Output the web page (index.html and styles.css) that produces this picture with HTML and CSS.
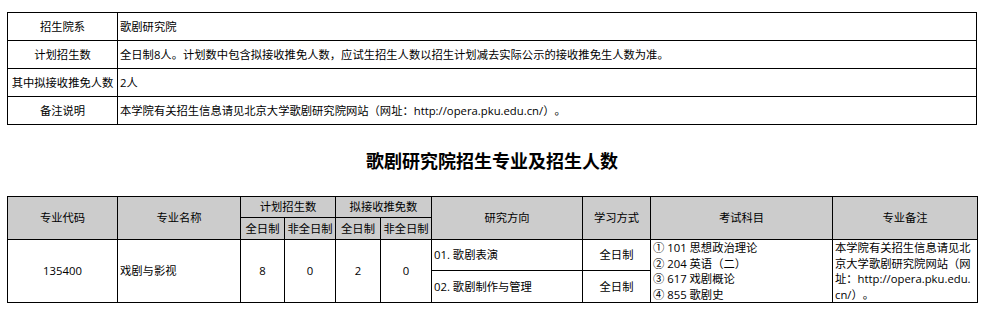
FILE: index.html
```html
<!DOCTYPE html>
<html lang="zh-CN">
<head>
<meta charset="utf-8">
<title>歌剧研究院招生专业及招生人数</title>
<link rel="stylesheet" href="styles.css">
</head>
<body>
<div class="page">
  <table class="info">
    <colgroup><col class="c-label"><col></colgroup>
    <tr><td class="label">招生院系</td><td>歌剧研究院</td></tr>
    <tr><td class="label">计划招生数</td><td>全日制8人。计划数中包含拟接收推免人数，应试生招生人数以招生计划减去实际公示的接收推免生人数为准。</td></tr>
    <tr><td class="label">其中拟接收推免人数</td><td>2人</td></tr>
    <tr><td class="label">备注说明</td><td>本学院有关招生信息请见北京大学歌剧研究院网站（网址：http://opera.pku.edu.cn/）。</td></tr>
  </table>

  <h1 class="title">歌剧研究院招生专业及招生人数</h1>

  <table class="majors">
    <colgroup>
      <col class="w110"><col class="w123"><col class="w44"><col class="w51"><col class="w45"><col class="w51"><col class="w151"><col class="w68"><col class="w182"><col class="w145">
    </colgroup>
    <tr class="h1">
      <th rowspan="2">专业代码</th>
      <th rowspan="2">专业名称</th>
      <th colspan="2">计划招生数</th>
      <th colspan="2">拟接收推免数</th>
      <th rowspan="2">研究方向</th>
      <th rowspan="2">学习方式</th>
      <th rowspan="2">考试科目</th>
      <th rowspan="2">专业备注</th>
    </tr>
    <tr class="h2">
      <th>全日制</th><th>非全日制</th><th>全日制</th><th>非全日制</th>
    </tr>
    <tr class="b1">
      <td rowspan="2" class="center">135400</td>
      <td rowspan="2">戏剧与影视</td>
      <td rowspan="2" class="center">8</td>
      <td rowspan="2" class="center">0</td>
      <td rowspan="2" class="center">2</td>
      <td rowspan="2" class="center">0</td>
      <td>01. 歌剧表演</td>
      <td class="center">全日制</td>
      <td rowspan="2" class="lines">① 101 思想政治理论<br>② 204 英语（二）<br>③ 617 戏剧概论<br>④ 855 歌剧史</td>
      <td rowspan="2" class="lines">本学院有关招生信息请见北京大学歌剧研究院网站（网址：http://opera.pku.edu.<wbr>cn/）。</td>
    </tr>
    <tr class="b2">
      <td>02. 歌剧制作与管理</td>
      <td class="center">全日制</td>
    </tr>
  </table>
</div>
</body>
</html>
```
FILE: styles.css
```css
html, body {
  margin: 0;
  padding: 0;
  background: #fff;
}
body {
  font-family: "Open Sans", "Noto Sans CJK SC", sans-serif;
  font-size: 11.3px;
  color: #000;
  text-spacing-trim: space-all;
}
.page {
  padding: 12px 0 0 7px;
  width: 970px;
}
table {
  border-collapse: collapse;
  table-layout: fixed;
  width: 970px;
  border: 1px solid #444;
}
td, th {
  border: 1px solid #000;
  padding: 0 2px;
  font-weight: normal;
  vertical-align: middle;
  text-align: left;
  line-height: 15.6px;
}
.c-label { width: 110px; }
.info tr { height: 28px; }
.info .label { text-align: center; padding: 0; }
.title {
  margin: 0;
  padding: 24px 0 23px;
  font-size: 18px;
  line-height: 24px;
  font-weight: bold;
  text-align: center;
}
.majors th {
  background: #cccccc;
  text-align: center;
  padding: 0;
}
.majors .h1 { height: 21px; }
.majors .h2 { height: 22px; }
.majors .b1 { height: 31px; }
.majors .b2 { height: 32px; }
.majors .center { text-align: center; }
.majors .lines { padding: 0 2px; }
.w110 { width: 110px; }
.w123 { width: 123px; }
.w44 { width: 44px; }
.w51 { width: 51px; }
.w45 { width: 45px; }
.w151 { width: 151px; }
.w68 { width: 68px; }
.w182 { width: 182px; }
.w145 { width: 145px; }
```
